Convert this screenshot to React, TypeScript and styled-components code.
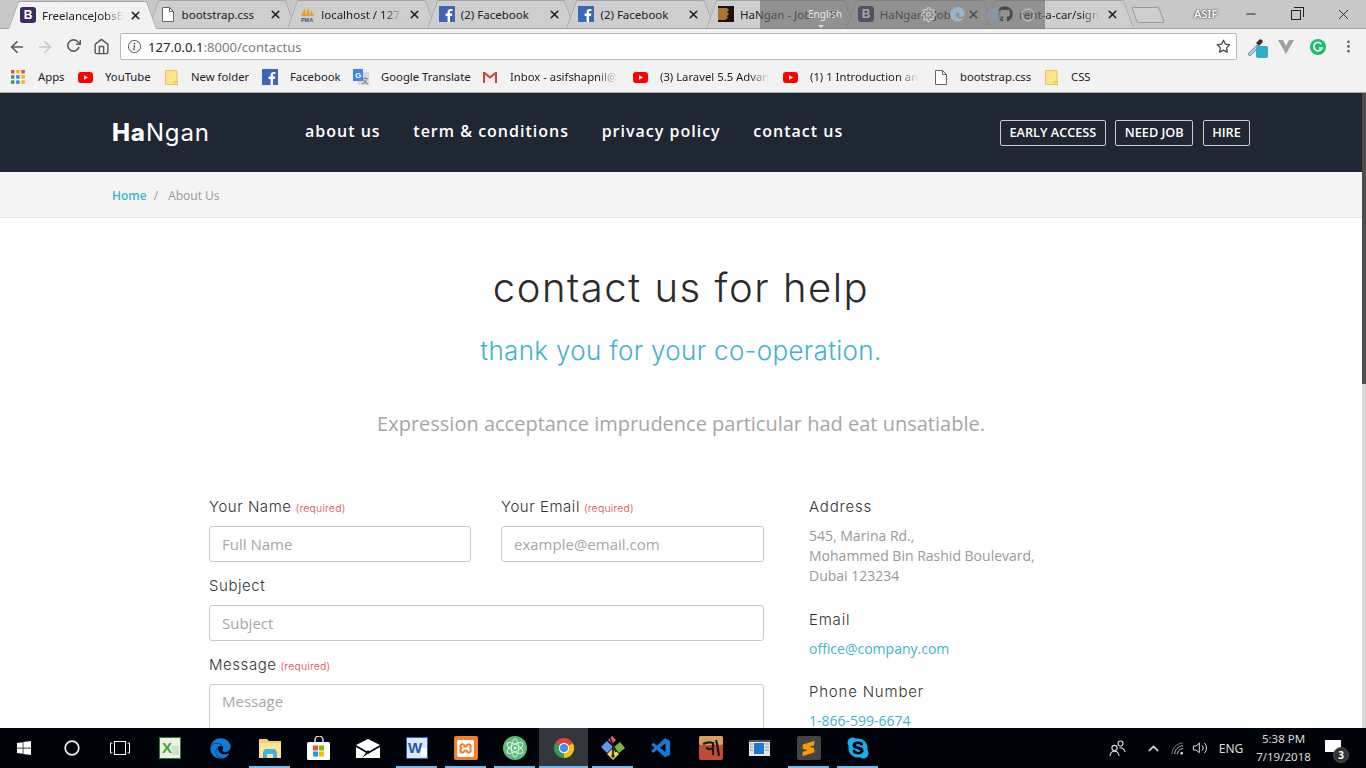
import React from 'react'
import styled, { createGlobalStyle } from 'styled-components'
import { FaEdge, FaGithub, FaSkype, FaWindows } from 'react-icons/fa'
import { SiSublimetext, SiXampp } from 'react-icons/si'
import { VscVscode } from 'react-icons/vsc'
import { FiArrowLeft, FiArrowRight, FiChevronUp, FiHome, FiRotateCw, FiStar, FiX, FiMinus, FiVolume2, FiSettings } from 'react-icons/fi'
import { BsInfoCircle, BsThreeDotsVertical } from 'react-icons/bs'

const GlobalStyle = createGlobalStyle`
  html, body {
    margin: 0;
    padding: 0;
    height: 100%;
    overflow: hidden;
    font-family: 'Open Sans', sans-serif;
  }
  * { box-sizing: border-box; }
`

const Screen = styled.div`
  position: relative;
  width: 1366px;
  height: 768px;
  display: flex;
  flex-direction: column;
  overflow: hidden;
  background: #fff;
`

/* browser chrome */
const TabStrip = styled.div`
  height: 29px;
  flex: none;
  display: flex;
  align-items: flex-end;
  padding-left: 8px;
  background: #c8c8c8;
  border-bottom: 1px solid #a3a3a3;
`

const TabItem = styled.div<{ $active?: boolean }>`
  position: relative;
  z-index: ${(p) => (p.$active ? 2 : 1)};
  flex: none;
  width: 149px;
  height: 28px;
  margin-right: -9.4px;
  margin-bottom: ${(p) => (p.$active ? '-1px' : '0')};
  display: flex;
  align-items: center;
  padding-left: 12px;
  font-family: 'Noto Sans', sans-serif;
  font-size: 11.5px;
  color: #222;

  &::before, &::after {
    content: '';
    position: absolute;
    top: 0;
    bottom: 0;
    width: 60%;
    background: ${(p) => (p.$active ? '#f2f2f2' : '#cecece')};
    border-top: 1px solid #a3a3a3;
  }
  &::before {
    left: 0;
    transform-origin: bottom left;
    transform: skewX(-20deg);
    border-left: 1px solid #a3a3a3;
    border-top-left-radius: 2px;
  }
  &::after {
    right: 0;
    transform-origin: bottom right;
    transform: skewX(20deg);
    border-right: 1px solid #a3a3a3;
    border-top-right-radius: 2px;
  }
  & > * {
    position: relative;
    z-index: 1;
  }
`

const TabIcon = styled.span`
  flex: none;
  width: 16px;
  height: 16px;
  margin-right: 6px;
  display: flex;
  align-items: center;
  justify-content: center;
`

const TabTitle = styled.span<{ $fade?: boolean }>`
  flex: none;
  width: 87px;
  overflow: hidden;
  white-space: nowrap;
  ${(p) => p.$fade && 'mask-image: linear-gradient(to right, #000 72%, transparent 94%);'}
`

const TabClose = styled.span`
  flex: none;
  display: flex;
  color: #222;
`

const NewTab = styled.div`
  flex: none;
  width: 28px;
  height: 16px;
  margin: 0 0 5px 9px;
  background: #cecece;
  border: 1px solid #9a9a9a;
  border-radius: 2px;
  transform: skewX(20deg);
`

const UserName = styled.span`
  margin: 0 0 7px 32px;
  width: 46px;
  font-family: 'Noto Sans', sans-serif;
  font-size: 11px;
  font-weight: 600;
  color: #fff;
  text-shadow: 0 0 2px #333, 0 0 1px #333;
`

const WindowButtons = styled.div`
  margin-left: auto;
  display: flex;
  align-self: flex-start;
  height: 28px;
`

const WindowButton = styled.span`
  width: 46px;
  height: 28px;
  display: flex;
  align-items: center;
  justify-content: center;
  color: #222;
`

const RestoreIcon = styled.span`
  position: relative;
  width: 10px;
  height: 10px;
  border: 1px solid #222;
  margin: 2px 2px 0 0;

  &::after {
    content: '';
    position: absolute;
    top: -4px;
    right: -4px;
    width: 9px;
    height: 9px;
    border-top: 1px solid #222;
    border-right: 1px solid #222;
  }
`

const LanguageOverlay = styled.div`
  position: absolute;
  top: 0;
  left: 760px;
  width: 285px;
  height: 29px;
  z-index: 5;
  background: rgba(105, 105, 105, 0.6);
  display: flex;
  align-items: center;
  color: #ddd;
`

const LanguageLabel = styled.span`
  position: relative;
  width: 161px;
  padding-left: 48px;
  font-family: 'Noto Sans', sans-serif;
  font-size: 10px;
  margin-bottom: 2px;
  color: #e4e4e4;

  &::after {
    content: '';
    position: absolute;
    left: 58px;
    top: 18px;
    border: 3px solid transparent;
    border-top: 3px solid #ddd;
  }
`

const OverlayGlyph = styled.span<{ $left: number }>`
  display: flex;
  margin-left: ${(p) => p.$left}px;
  opacity: 0.75;
`

const Toolbar = styled.div`
  height: 32px;
  flex: none;
  display: flex;
  align-items: center;
  padding-top: 3px;
  background: #f2f2f2;
`

const NavButton = styled.span<{ $dim?: boolean }>`
  flex: none;
  width: 28px;
  display: flex;
  justify-content: center;
  color: ${(p) => (p.$dim ? '#c9c9c9' : '#5a5a5a')};
`

const NavGroup = styled.div`
  display: flex;
  padding-left: 3px;
  width: 120px;
`

const Omnibox = styled.div`
  width: 1117px;
  height: 27px;
  flex: none;
  display: flex;
  align-items: center;
  padding: 0 5px 0 7px;
  background: #fff;
  border: 1px solid #b9b9b9;
  border-radius: 2px;
  color: #555;
`

const UrlText = styled.span`
  margin-left: 7px;
  font-family: 'Noto Sans', sans-serif;
  font-size: 13.1px;
  color: #222;
  flex: 1;
`

const UrlMuted = styled.span`
  color: #7c7c7c;
`

const Extensions = styled.div`
  flex: 1;
  display: flex;
  align-items: center;
`

const ExtensionSlot = styled.span<{ $width: number }>`
  position: relative;
  flex: none;
  width: ${(p) => p.$width}px;
  display: flex;
  justify-content: center;
  color: #666;
`

const ExtBadge = styled.span`
  position: absolute;
  left: 19px;
  top: 8px;
  width: 12px;
  height: 12px;
  border-radius: 2px;
  background: #2bb0c9;
`

const BookmarkBar = styled.div`
  height: 32px;
  flex: none;
  display: flex;
  align-items: center;
  padding: 1px 0 0 11px;
  background: #f2f2f2;
  border-bottom: 1px solid #a9a9a9;
`

const Bookmark = styled.div<{ $width: number; $gap: number }>`
  flex: none;
  width: ${(p) => p.$width}px;
  display: flex;
  align-items: center;
  font-family: 'Noto Sans', sans-serif;
  font-size: 11.3px;
  color: #222;

  & > span:first-child {
    flex: none;
    width: ${(p) => p.$gap}px;
    display: flex;
  }
`

const BookmarkText = styled.span<{ $fade?: boolean }>`
  max-width: 110px;
  overflow: hidden;
  white-space: nowrap;
  margin-top: -1px;
  ${(p) => p.$fade && 'mask-image: linear-gradient(to right, #000 82%, transparent 100%);'}
`

/* page */
const Viewport = styled.div`
  position: relative;
  flex: 1;
  min-height: 0;
  overflow: hidden;
  background: #fff;
  padding-right: 4px;
`

const ScrollTrack = styled.div`
  position: absolute;
  top: 0;
  right: 0;
  bottom: 0;
  width: 4px;
  background: #d9d9d9;

  &::before {
    content: '';
    display: block;
    height: 291px;
    background: #4e4e4e;
  }
`

const Header = styled.header`
  height: 79px;
  display: flex;
  align-items: center;
  padding-left: 112px;
  background: #1f2732;
`

const Logo = styled.div`
  width: 193px;
  font-family: 'Inter', sans-serif;
  font-size: 24px;
  font-weight: 400;
  color: #fff;
  letter-spacing: 0.9px;

  & b { font-weight: 800; }
`

const NavMenu = styled.nav`
  display: flex;
  gap: 32.7px;
  width: 695px;
`

const NavLink = styled.a`
  font-size: 16px;
  font-weight: 600;
  letter-spacing: 1px;
  color: #fff;
  margin-top: -4px;
`

const HeaderButtons = styled.div`
  display: flex;
  gap: 9.5px;
`

const HeaderButton = styled.a`
  height: 26px;
  padding: 0 8.5px 1px;
  display: flex;
  align-items: center;
  border: 1px solid #c9c9c9;
  border-radius: 2px;
  font-size: 12.7px;
  font-weight: 600;
  color: #fff;
`

const Breadcrumb = styled.div`
  height: 46px;
  display: flex;
  align-items: center;
  padding: 2px 0 0 112px;
  background: #f4f4f4;
  border-bottom: 1px solid #e6e6e6;
  font-size: 12px;
  color: #999;
`

const Crumb = styled.a`
  color: #3fb3cb;
  font-weight: 600;
`

const CrumbSep = styled.span`
  margin: 0 10px 0 7px;
`

const Intro = styled.section`
  padding-top: 43px;
  text-align: center;
`

const Title = styled.h1`
  margin: 0;
  font-family: 'Inter', sans-serif;
  font-size: 40px;
  line-height: 54px;
  font-weight: 300;
  letter-spacing: 1.55px;
  color: #2b2b2b;
`

const Subtitle = styled.h2`
  margin: 20px 0 0;
  font-family: 'Inter', sans-serif;
  font-size: 26px;
  line-height: 32px;
  font-weight: 300;
  letter-spacing: 0.33px;
  color: #3fb3cb;
`

const Lead = styled.p`
  margin: 42px 0 0;
  font-size: 20px;
  line-height: 30px;
  color: #a6a6a6;
`

const ContactRow = styled.div`
  display: flex;
  margin-top: 58px;
  padding-left: 209px;
`

const FormGrid = styled.form`
  width: 555px;
  display: grid;
  grid-template-columns: 262px 263px;
  column-gap: 30px;
  flex: none;
`

const Field = styled.div<{ $wide?: boolean }>`
  ${(p) => p.$wide && 'grid-column: 1 / -1;'}
  margin-bottom: 14px;
`

const Label = styled.label`
  display: block;
  height: 21px;
  margin-bottom: 8px;
  font-family: 'Inter', sans-serif;
  font-size: 15px;
  line-height: 20px;
  font-weight: 300;
  letter-spacing: 0.55px;
  color: #333;
`

const Required = styled.span`
  margin-left: 4px;
  font-size: 10.5px;
  letter-spacing: 0.2px;
  color: #e04050;
`

const TextInput = styled.input`
  display: block;
  width: 100%;
  height: 36px;
  padding: 0 12px;
  border: 1px solid #c9c9c9;
  border-radius: 3px;
  outline: none;
  font-family: 'Open Sans', sans-serif;
  font-size: 15px;

  &::placeholder { color: #a6a6a6; }
`

const TextArea = styled.textarea`
  display: block;
  width: 100%;
  height: 110px;
  padding: 6px 12px;
  border: 1px solid #c9c9c9;
  border-radius: 3px;
  outline: none;
  resize: none;
  font-family: 'Open Sans', sans-serif;
  font-size: 15px;

  &::placeholder { color: #a6a6a6; }
`

const InfoColumn = styled.aside`
  margin-left: 45px;
`

const InfoBlock = styled.div`
  margin-bottom: 24px;
`

const InfoTitle = styled.h4`
  margin: 0 0 9px;
  font-family: 'Inter', sans-serif;
  font-size: 15px;
  line-height: 20px;
  font-weight: 300;
  letter-spacing: 0.8px;
  color: #333;
`

const InfoText = styled.p`
  margin: 0;
  font-size: 14px;
  line-height: 20px;
  color: #999;
`

const InfoLink = styled.a`
  display: block;
  margin-bottom: -1px;
  font-size: 14px;
  line-height: 20px;
  color: #3fb3cb;
`

/* taskbar */
const Taskbar = styled.div`
  height: 40px;
  flex: none;
  display: flex;
  align-items: stretch;
  background: #01030a;
  color: #fff;
`

const TaskSlot = styled.div<{ $running?: boolean; $active?: boolean; $width?: number }>`
  position: relative;
  flex: none;
  width: ${(p) => p.$width ?? 49}px;
  display: flex;
  align-items: center;
  justify-content: center;
  background: ${(p) => (p.$active ? '#33363a' : 'transparent')};

  &::after {
    content: '';
    position: absolute;
    bottom: 0;
    left: ${(p) => (p.$active ? '0' : '4px')};
    right: ${(p) => (p.$active ? '0' : '4px')};
    height: 2px;
    background: ${(p) => (p.$running ? '#76b9ed' : 'transparent')};
  }
`

const Tray = styled.div`
  margin-left: auto;
  display: flex;
  align-items: center;
  color: #ddd;
  font-family: 'Noto Sans', sans-serif;
  font-size: 12px;
`

const TraySlot = styled.span<{ $width: number }>`
  flex: none;
  width: ${(p) => p.$width}px;
  display: flex;
  justify-content: center;
`

const Clock = styled.div`
  flex: none;
  width: 73px;
  text-align: center;
  line-height: 18px;
  font-size: 11.5px;
`

const Notice = styled.div`
  position: relative;
  width: 46px;
  height: 40px;
  padding: 12px 0 0 5px;
`

const NoticeBubble = styled.span`
  display: block;
  width: 16px;
  height: 12px;
  background: #fff;
`

const NoticeBadge = styled.span`
  position: absolute;
  left: 13px;
  top: 19px;
  width: 16px;
  height: 16px;
  display: flex;
  align-items: center;
  justify-content: center;
  border-radius: 50%;
  background: #333;
  border: 1px solid #555;
  font-size: 10px;
  font-weight: 700;
  color: #fff;
`

/* drawn icons */
const BootstrapIcon = () => (
  <svg width="16" height="16" viewBox="0 0 16 16">
    <rect width="16" height="16" rx="3" fill="#3d2a64" />
    <text x="8" y="12.4" textAnchor="middle" fontSize="12" fontWeight="700" fontFamily="Liberation Sans" fill="#fff">B</text>
  </svg>
)

const FacebookIcon = () => (
  <svg width="16" height="16" viewBox="0 0 16 16">
    <rect width="16" height="16" fill="#3f65b5" />
    <path d="M11 16v-6h2l.3-2.4H11V6.2c0-.7.2-1.1 1.2-1.1h1.2V3c-.3 0-1-.1-1.8-.1-1.8 0-3 1.1-3 3.1v1.6h-2V10h2v6z" fill="#fff" />
  </svg>
)

const PageIcon = () => (
  <svg width="12" height="15" viewBox="0 0 12 15" fill="#fff" stroke="#666" strokeWidth="1">
    <path d="M.5.5h7l4 4v10H.5z" />
    <path d="M7.500.5v4h4" fill="none" />
  </svg>
)

const PmaIcon = () => (
  <svg width="16" height="16" viewBox="0 0 16 16">
    <path d="M2 10 6 2l1 8zM7 10l2-9 2 9zM11 10l1-6 3 6z" fill="#f09a28" />
    <text x="8" y="15.500" textAnchor="middle" fontSize="5.500" fontWeight="700" fontFamily="Liberation Sans" fill="#3a4f8c">PMA</text>
  </svg>
)

const HaNganIcon = () => (
  <svg width="16" height="16" viewBox="0 0 16 16">
    <rect width="16" height="16" fill="#1a1208" />
    <path d="M0 2h9l2 2-2 2 2 2-2 2 1 2-3 2H0z" fill="#a9752f" />
  </svg>
)

const YoutubeIcon = () => (
  <svg width="15" height="11" viewBox="0 0 15 11">
    <rect width="15" height="11" rx="3" fill="#f00" />
    <path d="M6 3.200v4.600l4-2.300z" fill="#fff" />
  </svg>
)

const FolderIcon = () => (
  <svg width="13" height="15" viewBox="0 0 13 15">
    <path d="M.500.500h11.500v14H.500z" fill="#fde28f" stroke="#f0c347" />
    <rect x="9.500" y="11.500" width="3" height="3" fill="#fde28f" stroke="#f0c347" />
  </svg>
)

const AppsIcon = () => (
  <svg width="14" height="14" viewBox="0 0 14 14">
    {[
      '#e9462f', '#f5b400', '#e9462f',
      '#2e9e4f', '#3b7de8', '#f5b400',
      '#2e9e4f', '#3b7de8', '#f5b400',
    ].map((color, i) => (
      <rect key={i} x={(i % 3) * 5.2} y={Math.floor(i / 3) * 5.2} width="3.400" height="3.400" fill={color} />
    ))}
  </svg>
)

const TranslateIcon = () => (
  <svg width="16" height="16" viewBox="0 0 16 16">
    <rect x="5" y="3" width="11" height="13" fill="#d9d9d9" />
    <path d="M0 0h10v12H0z" fill="#4285f4" />
    <text x="5" y="9" textAnchor="middle" fontSize="8" fontWeight="700" fontFamily="Liberation Sans" fill="#fff">G</text>
    <text x="12" y="14" textAnchor="middle" fontSize="7" fontFamily="Noto Sans CJK SC" fill="#666">文</text>
  </svg>
)

const GmailIcon = () => (
  <svg width="14" height="12" viewBox="0 0 14 12">
    <path d="M1 12V1.500l6 5 6-5V12" fill="#eee" />
    <path d="M1 12V1M1 1.500l6 5 6-5M13 1v11" fill="none" stroke="#cf4235" strokeWidth="2" />
  </svg>
)

const DropperIcon = () => (
  <svg width="18" height="18" viewBox="0 0 18 18">
    <path d="M2 16l9-9 2 2-9 9z" fill="#9fd6ea" stroke="#5c8fb0" />
    <path d="M10 5l3-3c1-1 2-1 3 0s1 2 0 3l-3 3z" fill="#333" />
  </svg>
)

const VivaldiV = () => (
  <svg width="16" height="14" viewBox="0 0 16 14">
    <path d="M0 0h5l3 6 3-6h5L8 14z" fill="#a0a0a0" />
  </svg>
)

const GrammarlyIcon = () => (
  <svg width="16" height="16" viewBox="0 0 16 16">
    <circle cx="8" cy="8" r="8" fill="#15c26b" />
    <path d="M11.500 5.200A4.200 4.200 0 1 0 12 9H8.800" fill="none" stroke="#fff" strokeWidth="1.700" />
  </svg>
)

const ExcelIcon = () => (
  <svg width="22" height="22" viewBox="0 0 22 22">
    <rect width="22" height="22" fill="#2f7d3a" />
    <rect x="1" y="1" width="20" height="20" fill="#eaf3e4" />
    <text x="8" y="16" textAnchor="middle" fontSize="15" fontWeight="700" fontFamily="Liberation Sans" fill="#4e9e2f">X</text>
    <path d="M13 9h7v9h-7z" fill="#cfe3c3" />
  </svg>
)

const ExplorerIcon = () => (
  <svg width="22" height="20" viewBox="0 0 22 20">
    <path d="M0 1h8l2 2h12v17H0z" fill="#f5cf6b" />
    <path d="M0 5h22v15H0z" fill="#fde48e" />
    <path d="M4 20v-6l2-3h10l2 3v6h-4v-4H8v4z" fill="#3fb4e8" />
  </svg>
)

const StoreIcon = () => (
  <svg width="24" height="24" viewBox="0 0 24 24">
    <path d="M8 7V4a4 4 0 0 1 8 0v3" fill="none" stroke="#ddd" strokeWidth="1.500" />
    <rect y="6" width="23" height="18" rx="1.500" fill="#fff" />
    <rect x="6" y="9.500" width="5" height="5" fill="#f25022" />
    <rect x="12" y="9.500" width="5" height="5" fill="#7fba00" />
    <rect x="6" y="15.500" width="5" height="5" fill="#00a4ef" />
    <rect x="12" y="15.500" width="5" height="5" fill="#ffb900" />
  </svg>
)

const MailIcon = () => (
  <svg width="24" height="19" viewBox="0 0 24 19">
    <path d="M0 6 12 0l12 6-12 7z" fill="#fff" />
    <path d="M0 8v11h24V8L12 15z" fill="#fff" />
    <path d="M6 19 12 11l2 2z" fill="#111" />
  </svg>
)

const WordIcon = () => (
  <svg width="22" height="22" viewBox="0 0 22 22">
    <rect width="22" height="22" fill="#2f5fb3" />
    <rect x="1" y="1" width="20" height="20" fill="#dbe7f8" />
    <text x="9" y="16" textAnchor="middle" fontSize="15" fontWeight="700" fontFamily="Liberation Sans" fill="#2456b0">W</text>
    <path d="M15 11h6v8h-6z" fill="#fff" />
  </svg>
)

const AtomIcon = () => (
  <svg width="24" height="24" viewBox="0 0 24 24">
    <circle cx="12" cy="12" r="12" fill="#5fbb7c" />
    <g fill="none" stroke="#e8f7ea" strokeWidth="0.900">
      <ellipse cx="12" cy="12" rx="9" ry="3.600" transform="rotate(30 12 12)" />
      <ellipse cx="12" cy="12" rx="9" ry="3.600" transform="rotate(-30 12 12)" />
      <ellipse cx="12" cy="12" rx="9" ry="3.600" transform="rotate(90 12 12)" />
    </g>
    <circle cx="12" cy="12" r="1.600" fill="#e8f7ea" />
  </svg>
)

const ChromeIcon = () => (
  <svg width="22" height="22" viewBox="0 0 24 24">
    <path d="M12 12 2.470 6.500A11 11 0 0 1 21.530 6.500z" fill="#db4437" />
    <path d="M12 12 21.530 6.500A11 11 0 0 1 12 23z" fill="#f4c20d" />
    <path d="M12 12 12 23A11 11 0 0 1 2.470 6.500z" fill="#2f9e54" />
    <circle cx="12" cy="12" r="5.700" fill="#fff" />
    <circle cx="12" cy="12" r="4.400" fill="#4c8bf5" />
  </svg>
)

const GitExtIcon = () => (
  <svg width="24" height="24" viewBox="0 0 24 24">
    <path d="M0 11 6 5l6 6-6 6z" fill="#5b9bf0" />
    <path d="M7 4l4-4 4 4-4 4z" fill="#e0606a" />
    <path d="M13 11l6-5 5 6-6 5z" fill="#7eb53d" />
    <path d="M6 18l6-6 6 6-6 6z" fill="#f2d25c" />
    <path d="M9 2l6 14M12 11v9" stroke="#222" strokeWidth="1.800" />
    <circle cx="12" cy="20" r="1.700" fill="#222" />
  </svg>
)

const AvroIcon = () => (
  <svg width="24" height="24" viewBox="0 0 24 24">
    <rect width="24" height="24" rx="2" fill="#c24b38" />
    <rect width="24" height="9" rx="2" fill="#d8a05c" />
    <path d="M4 8c6-3 12-2 10 3-1 3-6 3-6 0M14 6v13M17 4c2 6 2 12 3 16" fill="none" stroke="#1a1a1a" strokeWidth="2.200" />
  </svg>
)

const WindowAppIcon = () => (
  <svg width="21" height="16" viewBox="0 0 21 16">
    <rect width="21" height="16" fill="#e6e6e6" />
    <rect y="0" width="21" height="2" fill="#555" />
    <rect x="5" y="3" width="10" height="11" fill="#1c78d4" />
    <path d="M1 4h3M1 7h3M1 10h3M16 4h4M16 7h4M16 10h4" stroke="#8a8a8a" />
  </svg>
)

const SublimeTile = styled.span`
  width: 24px;
  height: 24px;
  display: flex;
  align-items: center;
  justify-content: center;
  border-radius: 2px;
  background: #444;
  color: #ff9800;
`

const XamppTile = styled.span`
  width: 24px;
  height: 24px;
  display: flex;
  align-items: center;
  justify-content: center;
  border-radius: 2px;
  background: #f0802f;
  color: #fff;
`

const TaskViewIcon = () => (
  <svg width="20" height="14" viewBox="0 0 20 14" fill="none" stroke="#fff" strokeWidth="1">
    <rect x="4.500" y=".5" width="11" height="13" />
    <path d="M2.500 2H.5v10h2M17.500 2h2v10h-2" />
  </svg>
)

const PeopleIcon = () => (
  <svg width="17" height="17" viewBox="0 0 17 17" fill="none" stroke="#ddd" strokeWidth="1.100">
    <circle cx="5.500" cy="8" r="2.600" />
    <path d="M1 16c.3-3 2-4.800 4.500-4.800S9.700 13 10 16" />
    <circle cx="11.500" cy="3.500" r="2.500" />
    <path d="M10.500 7.800c2.800-.6 5 1.400 5.500 4.200" />
  </svg>
)

const WifiIcon = () => (
  <svg width="15" height="15" viewBox="0 0 15 15" fill="none" stroke="#ccc" strokeWidth="1">
    <path d="M1 13.500C1 7 6 2 13 1.500" opacity="0.6" />
    <path d="M4 13.500C4 9 7.500 5 13 4.500" />
    <path d="M7 13.500c0-3 2-5.500 6-6" />
    <circle cx="11.500" cy="12.500" r="1.300" fill="#eee" stroke="none" />
  </svg>
)

const tabs = [
  { icon: <BootstrapIcon />, title: 'FreelanceJobsB', active: true, fade: true },
  { icon: <PageIcon />, title: 'bootstrap.css' },
  { icon: <PmaIcon />, title: 'localhost / 127.', fade: true },
  { icon: <FacebookIcon />, title: '(2) Facebook' },
  { icon: <FacebookIcon />, title: '(2) Facebook' },
  { icon: <HaNganIcon />, title: 'HaNgan - Job', fade: false },
  { icon: <BootstrapIcon />, title: 'HaNgan - Job', fade: false },
  { icon: <FaGithub size={16} color="#1b1b1b" />, title: 'rent-a-car/sign', fade: true },
]

const bookmarks = [
  { icon: <AppsIcon />, text: 'Apps', width: 67, gap: 27 },
  { icon: <YoutubeIcon />, text: 'YouTube', width: 87, gap: 27 },
  { icon: <FolderIcon />, text: 'New folder', width: 97, gap: 26 },
  { icon: <FacebookIcon />, text: 'Facebook', width: 91, gap: 28 },
  { icon: <TranslateIcon />, text: 'Google Translate', width: 130, gap: 28 },
  { icon: <GmailIcon />, text: 'Inbox - asifshapnil@', width: 150, gap: 27, fade: true },
  { icon: <YoutubeIcon />, text: '(3) Laravel 5.5 Advan', width: 150, gap: 27, fade: true },
  { icon: <YoutubeIcon />, text: '(1) 1 Introduction an', width: 152, gap: 27, fade: true },
  { icon: <PageIcon />, text: 'bootstrap.css', width: 110, gap: 25 },
  { icon: <FolderIcon />, text: 'CSS', width: 60, gap: 26 },
]

type TaskItem = { icon: React.ReactNode; running?: boolean; active?: boolean; width?: number }

const taskItems: TaskItem[] = [
  { icon: <FaWindows size={16} color="#fff" />, width: 48 },
  { icon: <svg width="16" height="16" viewBox="0 0 16 16"><circle cx="8" cy="8" r="6.800" fill="none" stroke="#eee" strokeWidth="1.700" /></svg>, width: 48 },
  { icon: <TaskViewIcon />, width: 48 },
  { icon: <ExcelIcon />, width: 52 },
  { icon: <FaEdge size={21} color="#0f7ad8" /> },
  { icon: <ExplorerIcon />, running: true },
  { icon: <StoreIcon /> },
  { icon: <MailIcon /> },
  { icon: <WordIcon />, running: true },
  { icon: <XamppTile><SiXampp size={17} /></XamppTile>, running: true },
  { icon: <AtomIcon />, running: true },
  { icon: <ChromeIcon />, running: true, active: true },
  { icon: <GitExtIcon />, running: true },
  { icon: <VscVscode size={23} color="#1679cf" /> },
  { icon: <AvroIcon /> },
  { icon: <WindowAppIcon /> },
  { icon: <SublimeTile><SiSublimetext size={15} /></SublimeTile>, running: true },
  { icon: <FaSkype size={24} color="#18aeea" />, running: true },
]

const App: React.FC = () => {
  return (
    <Screen>
      <GlobalStyle />
      <TabStrip>
        {tabs.map((tab, i) => (
          <TabItem key={i} $active={tab.active}>
            <TabIcon>{tab.icon}</TabIcon>
            <TabTitle $fade={tab.fade}>{tab.title}</TabTitle>
            <TabClose><FiX size={13} strokeWidth={3} /></TabClose>
          </TabItem>
        ))}
        <NewTab />
        <UserName>ASIF</UserName>
        <WindowButtons>
          <WindowButton><FiMinus size={14} /></WindowButton>
          <WindowButton><RestoreIcon /></WindowButton>
          <WindowButton><FiX size={17} strokeWidth={1.300} /></WindowButton>
        </WindowButtons>
      </TabStrip>
      <LanguageOverlay>
        <LanguageLabel>English</LanguageLabel>
        <OverlayGlyph $left={0}><FiSettings size={15} /></OverlayGlyph>
        <OverlayGlyph $left={14}><FaEdge size={15} color="#9bc6e8" /></OverlayGlyph>
        <OverlayGlyph $left={21}>
          <svg width="16" height="16" viewBox="0 0 16 16"><circle cx="8" cy="8" r="7" fill="#8a9ab0" /></svg>
        </OverlayGlyph>
        <OverlayGlyph $left={18}>
          <svg width="16" height="16" viewBox="0 0 16 16"><circle cx="8" cy="8" r="6" fill="none" stroke="#ddd" /></svg>
        </OverlayGlyph>
      </LanguageOverlay>

      <Toolbar>
        <NavGroup>
          <NavButton><FiArrowLeft size={18} strokeWidth={2.300} /></NavButton>
          <NavButton $dim><FiArrowRight size={18} strokeWidth={2.300} /></NavButton>
          <NavButton><FiRotateCw size={15} strokeWidth={2.500} /></NavButton>
          <NavButton><FiHome size={17} strokeWidth={2} /></NavButton>
        </NavGroup>
        <Omnibox>
          <BsInfoCircle size={13} color="#444" />
          <UrlText>127.0.0.1<UrlMuted>:8000/contactus</UrlMuted></UrlText>
          <FiStar size={15} color="#444" strokeWidth={2} />
        </Omnibox>
        <Extensions>
          <ExtensionSlot $width={36}><DropperIcon /><ExtBadge /></ExtensionSlot>
          <ExtensionSlot $width={26}><VivaldiV /></ExtensionSlot>
          <ExtensionSlot $width={38}><GrammarlyIcon /></ExtensionSlot>
          <ExtensionSlot $width={22}><BsThreeDotsVertical size={15} /></ExtensionSlot>
        </Extensions>
      </Toolbar>

      <BookmarkBar>
        {bookmarks.map((item) => (
          <Bookmark key={item.text} $width={item.width} $gap={item.gap}>
            <span>{item.icon}</span>
            <BookmarkText $fade={item.fade}>{item.text}</BookmarkText>
          </Bookmark>
        ))}
      </BookmarkBar>

      <Viewport>
        <Header>
          <Logo><b>Ha</b>Ngan</Logo>
          <NavMenu>
            <NavLink>about us</NavLink>
            <NavLink>term &amp; conditions</NavLink>
            <NavLink>privacy policy</NavLink>
            <NavLink>contact us</NavLink>
          </NavMenu>
          <HeaderButtons>
            <HeaderButton>EARLY ACCESS</HeaderButton>
            <HeaderButton>NEED JOB</HeaderButton>
            <HeaderButton>HIRE</HeaderButton>
          </HeaderButtons>
        </Header>
        <Breadcrumb>
          <Crumb>Home</Crumb>
          <CrumbSep>/</CrumbSep>
          About Us
        </Breadcrumb>
        <Intro>
          <Title>contact us for help</Title>
          <Subtitle>thank you for your co-operation.</Subtitle>
          <Lead>Expression acceptance imprudence particular had eat unsatiable.</Lead>
        </Intro>
        <ContactRow>
          <FormGrid>
            <Field>
              <Label>Your Name<Required>(required)</Required></Label>
              <TextInput placeholder="Full Name" />
            </Field>
            <Field>
              <Label>Your Email<Required>(required)</Required></Label>
              <TextInput placeholder="example@email.com" />
            </Field>
            <Field $wide>
              <Label>Subject</Label>
              <TextInput placeholder="Subject" />
            </Field>
            <Field $wide>
              <Label>Message<Required>(required)</Required></Label>
              <TextArea placeholder="Message" />
            </Field>
          </FormGrid>
          <InfoColumn>
            <InfoBlock>
              <InfoTitle>Address</InfoTitle>
              <InfoText>545, Marina Rd.,<br />Mohammed Bin Rashid Boulevard,<br />Dubai 123234</InfoText>
            </InfoBlock>
            <InfoBlock>
              <InfoTitle>Email</InfoTitle>
              <InfoLink>office@company.com</InfoLink>
            </InfoBlock>
            <InfoBlock>
              <InfoTitle>Phone Number</InfoTitle>
              <InfoLink>1-866-599-6674</InfoLink>
            </InfoBlock>
          </InfoColumn>
        </ContactRow>
        <ScrollTrack />
      </Viewport>

      <Taskbar>
        {taskItems.map((item, i) => (
          <TaskSlot key={i} $running={item.running} $active={item.active} $width={item.width}>{item.icon}</TaskSlot>
        ))}
        <Tray>
          <TraySlot $width={36}><PeopleIcon /></TraySlot>
          <TraySlot $width={36}><FiChevronUp size={17} /></TraySlot>
          <TraySlot $width={14}><WifiIcon /></TraySlot>
          <TraySlot $width={30}><FiVolume2 size={16} strokeWidth={1.500} /></TraySlot>
          <TraySlot $width={32}>ENG</TraySlot>
          <Clock>5:38 PM<br />7/19/2018</Clock>
          <Notice>
            <NoticeBubble />
            <NoticeBadge>3</NoticeBadge>
          </Notice>
        </Tray>
      </Taskbar>
    </Screen>
  )
}

export default App
